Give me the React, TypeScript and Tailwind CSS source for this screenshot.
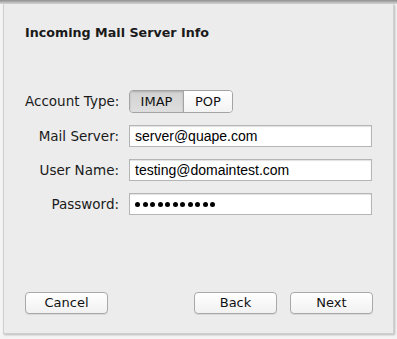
import React from 'react';

const LABEL_FONT = { fontFamily: '"DejaVu Sans", "Lucida Grande", sans-serif' };
const INPUT_FONT = { fontFamily: '"Liberation Sans", Arial, sans-serif' };

const Field = ({ label, children }: { label: string; children: React.ReactNode }) => (
  <div className="flex items-center h-[22px]">
    <div className="w-[94px] text-right text-[13.5px] text-[#1a1a1a] whitespace-nowrap">{label}</div>
    <div className="ml-[10px]">{children}</div>
  </div>
);

const TextBox = ({ children }: { children: React.ReactNode }) => (
  <div
    className="w-[243px] h-[22px] flex items-center px-[5px] bg-white border border-[#b5b5b5] shadow-[inset_0_1px_1px_rgba(0,0,0,0.12)] text-[14px] text-black"
    style={INPUT_FONT}
  >
    {children}
  </div>
);

const MacButton = ({ label }: { label: string }) => (
  <button className="w-[83px] h-[22px] rounded-[4px] border border-[#a9a9a9] bg-gradient-to-b from-white to-[#f1f1f1] shadow-[0_1px_0_rgba(0,0,0,0.08)] text-[13px] text-[#111]">
    {label}
  </button>
);

export default function App() {
  return (
    <div className="w-[397px] h-[339px] bg-[#f4f4f4] overflow-hidden" style={LABEL_FONT}>
      {/* shadow of window edge above */}
      <div className="h-[4px] bg-gradient-to-b from-[#8f8f8f] to-[#d9d9d9]" />
      <div className="ml-[3px] mr-[3px] h-[330px] bg-[#ececec] border-l border-r border-b border-[#cfcfcf] shadow-[1px_1px_2px_rgba(0,0,0,0.25)] flex flex-col">
        <div className="pt-[19px] pl-[21px] text-[12.7px] font-bold text-[#1a1a1a]">Incoming Mail Server Info</div>

        <div className="mt-[48px] pl-[21px] flex flex-col">
          <div className="flex items-center h-[23px]">
            <div className="w-[94px] text-right text-[13.5px] text-[#1a1a1a] whitespace-nowrap">Account Type:</div>
            <div className="ml-[10px] flex h-[23px] rounded-[4px] border border-[#a3a3a3] overflow-hidden text-[13px] text-[#111]">
              <div className="w-[54px] flex items-center justify-center bg-gradient-to-b from-[#d2d2d2] to-[#dedede] shadow-[inset_0_1px_2px_rgba(0,0,0,0.18)] border-r border-[#a3a3a3]">
                IMAP
              </div>
              <div className="w-[48px] flex items-center justify-center bg-gradient-to-b from-white to-[#f3f3f3]">POP</div>
            </div>
          </div>

          <div className="mt-[12px] flex flex-col gap-[12px]">
            <Field label="Mail Server:">
              <TextBox>server@quape.com</TextBox>
            </Field>
            <Field label="User Name:">
              <TextBox>testing@domaintest.com</TextBox>
            </Field>
            <Field label="Password:">
              <TextBox>
                <div className="flex gap-[2.5px]">
                  {Array.from({ length: 11 }).map((_, i) => (
                    <span key={i} className="w-[5px] h-[5px] rounded-full bg-black" />
                  ))}
                </div>
              </TextBox>
            </Field>
          </div>
        </div>

        <div className="mt-auto mb-[19px] pl-[21px] pr-[20px] flex items-center">
          <MacButton label="Cancel" />
          <div className="ml-auto flex gap-[13px]">
            <MacButton label="Back" />
            <MacButton label="Next" />
          </div>
        </div>
      </div>
    </div>
  );
}
